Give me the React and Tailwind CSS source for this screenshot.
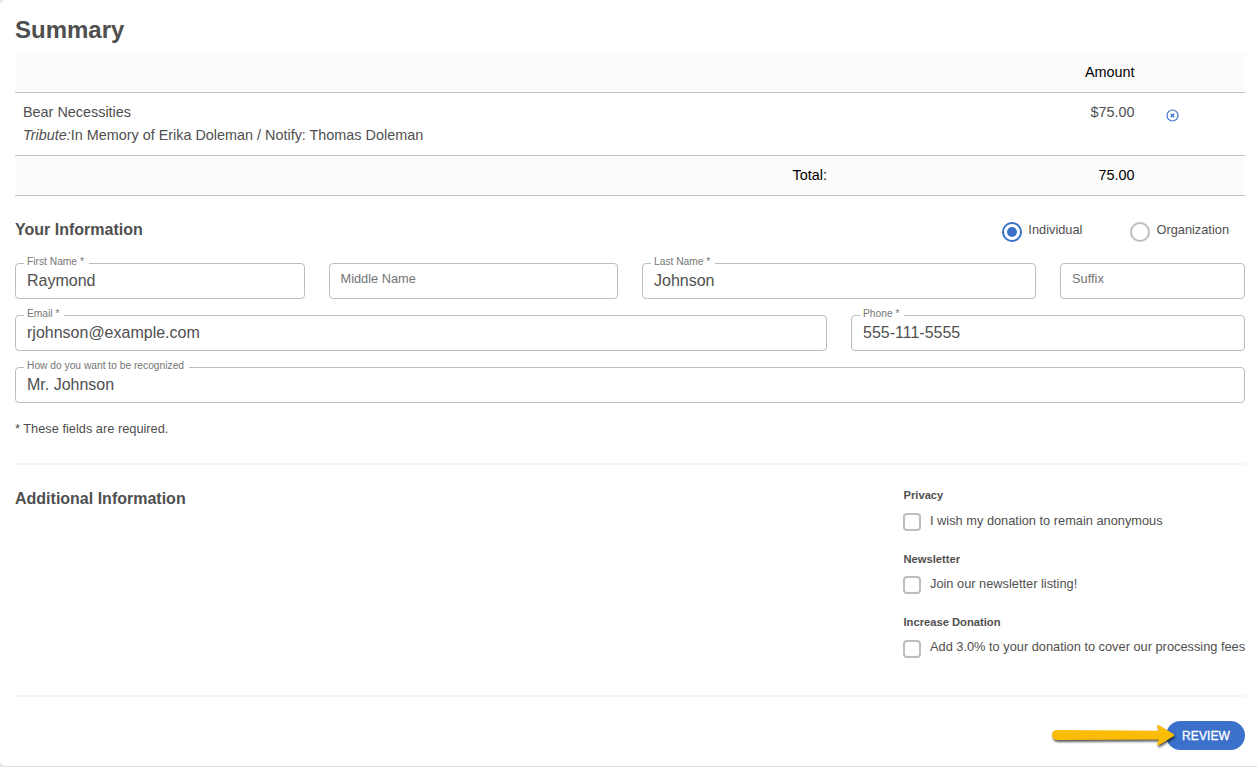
/* ------------------------------------------------------------------ */
/*  Form controls                                                     */
/* ------------------------------------------------------------------ */
function Field({ label, value, className }) {
  return (
    <div className={`relative h-9 rounded border border-[#bdbdbd] ${className}`}>
      {value ? (
        <>
          <label className="absolute -top-[9px] left-2 h-3.5 bg-white pl-[3px] pr-[5px] text-[10.24px] leading-[14px] whitespace-nowrap text-[#757575]">
            {label}
          </label>
          <div className="px-[11px] text-base leading-[33px]">{value}</div>
        </>
      ) : (
        <div className="px-[11px] text-[12.8px] leading-[29px] text-[#757575]">
          {label}
        </div>
      )}
    </div>
  );
}

function Radio({ label, checked }) {
  return (
    <label className="flex h-5 gap-1.5 text-[12.8px] leading-4">
      <span
        className={`flex size-5 items-center justify-center rounded-full border-2 ${
          checked ? "border-[#3b71ca]" : "border-[#bdbdbd]"
        }`}
      >
        {checked && <span className="size-2.5 rounded-full bg-[#3b71ca]" />}
      </span>
      {label}
    </label>
  );
}

function CheckGroup({ title, label, className, labelClass }) {
  return (
    <div className={className}>
      <h3 className="pl-[0.5px] text-[11.2px] leading-4 font-bold">{title}</h3>
      <label
        className={`flex text-[12.8px] whitespace-nowrap ${labelClass}`}
      >
        <span className="mr-[9px] size-[18px] shrink-0 rounded border-2 border-[#bdbdbd]" />
        {label}
      </label>
    </div>
  );
}

/* ------------------------------------------------------------------ */
/*  Summary table                                                     */
/* ------------------------------------------------------------------ */
const rowClass =
  "grid grid-cols-[812px_307.5px_110.5px] border-b border-[#c1c1c1] text-[14.4px]";

function SummaryTable() {
  return (
    <div className="mt-2">
      <div className={`${rowClass} h-10 bg-[#fbfbfb] text-black`}>
        <div />
        <div className="text-right leading-[39px]">Amount</div>
      </div>
      <div className={`${rowClass} h-[63px] pt-2 leading-[23px]`}>
        <div className="pl-2">
          <div>Bear Necessities</div>
          <div>
            <i>Tribute:</i>In Memory of Erika Doleman / Notify: Thomas Doleman
          </div>
        </div>
        <div className="text-right">$75.00</div>
        <div className="pt-2 pl-[31.5px]">
          <svg
            width="13"
            height="13"
            viewBox="0 0 13 13"
            fill="none"
            stroke="#3b71ca"
          >
            <circle cx="6.5" cy="6.5" r="5.5" strokeWidth="1.2" />
            <path d="M4.8 4.8l3.4 3.4M8.2 4.8L4.8 8.2" strokeWidth="1.4" />
          </svg>
        </div>
      </div>
      <div className={`${rowClass} h-10 bg-[#fbfbfb] leading-[39px] text-black`}>
        <div className="text-right">Total:</div>
        <div className="text-right">75.00</div>
      </div>
    </div>
  );
}

/* ------------------------------------------------------------------ */
/*  Arrow pointing at the review button                               */
/* ------------------------------------------------------------------ */
function Arrow() {
  return (
    <svg
      className="absolute -top-1 right-[65px] drop-shadow-[1px_2px_1px_rgba(0,0,0,0.65)]"
      width="130"
      height="34"
      viewBox="0 0 130 34"
    >
      <path
        d="M7 13L109 13.7L107 9.5Q106.500 7.200 109 8.200L123.500 17Q124.800 18.200 123.500 19.300L109 28Q106.200 29 107 26.500L109 22.600L7 23Q2 22.800 2 18Q2 13.200 7 13Z"
        fill="#fbbc05"
      />
    </svg>
  );
}

/* ------------------------------------------------------------------ */
/*  App                                                               */
/* ------------------------------------------------------------------ */
export default function App() {
  return (
    <div className="bg-[#e9e9e9]">
      <div className="h-[767px] overflow-hidden rounded-l-md rounded-br-xs border-b border-[#e0e0e0] bg-white pr-3 pl-[15px] font-['Liberation_Sans',Arial,sans-serif] text-[#4f4f4f]">
        <h1 className="pt-[15px] text-2xl leading-[30px] font-bold">Summary</h1>
        <SummaryTable />

        <div className="mt-[26px] flex h-[41px] justify-between pr-4">
          <h2 className="text-base leading-4 font-bold">Your Information</h2>
          <div className="flex gap-12">
            <Radio label="Individual" checked />
            <Radio label="Organization" />
          </div>
        </div>

        <div className="grid grid-cols-12 gap-x-6 gap-y-4">
          <Field className="col-span-3" label="First Name *" value="Raymond" />
          <Field className="col-span-3" label="Middle Name" />
          <Field className="col-span-4" label="Last Name *" value="Johnson" />
          <Field className="col-span-2" label="Suffix" />
          <Field
            className="col-span-8"
            label="Email *"
            value="rjohnson@example.com"
          />
          <Field className="col-span-4" label="Phone *" value="555-111-5555" />
          <Field
            className="col-span-12"
            label="How do you want to be recognized"
            value="Mr. Johnson"
          />
        </div>
        <p className="mt-[18px] text-[12.8px] leading-4">
          * These fields are required.
        </p>

        <hr className="mt-[26px] border-t-2 border-[#f5f5f5]" />
        <div className="flex h-[230px] justify-between pt-[22px]">
          <h2 className="pt-1 text-base leading-4 font-bold">
            Additional Information
          </h2>
          <div className="w-[342px]">
            <CheckGroup
              title="Privacy"
              label="I wish my donation to remain anonymous"
              className="h-[64px]"
              labelClass="mt-[10px] leading-[15px]"
            />
            <CheckGroup
              title="Newsletter"
              label="Join our newsletter listing!"
              className="h-[63px]"
              labelClass="mt-[9px] leading-[15px]"
            />
            <CheckGroup
              title="Increase Donation"
              label="Add 3.0% to your donation to cover our processing fees"
              labelClass="mt-[10px] leading-[13px]"
            />
          </div>
        </div>
        <hr className="border-t-2 border-[#f5f5f5]" />

        <div className="relative mt-6 flex justify-end">
          <button className="h-[29px] w-[79px] rounded-full bg-[#3b71ca] pl-px text-xs font-medium tracking-[0.1px] text-white [-webkit-text-stroke:0.3px_white]">
            REVIEW
          </button>
          <Arrow />
        </div>
      </div>
    </div>
  );
}
